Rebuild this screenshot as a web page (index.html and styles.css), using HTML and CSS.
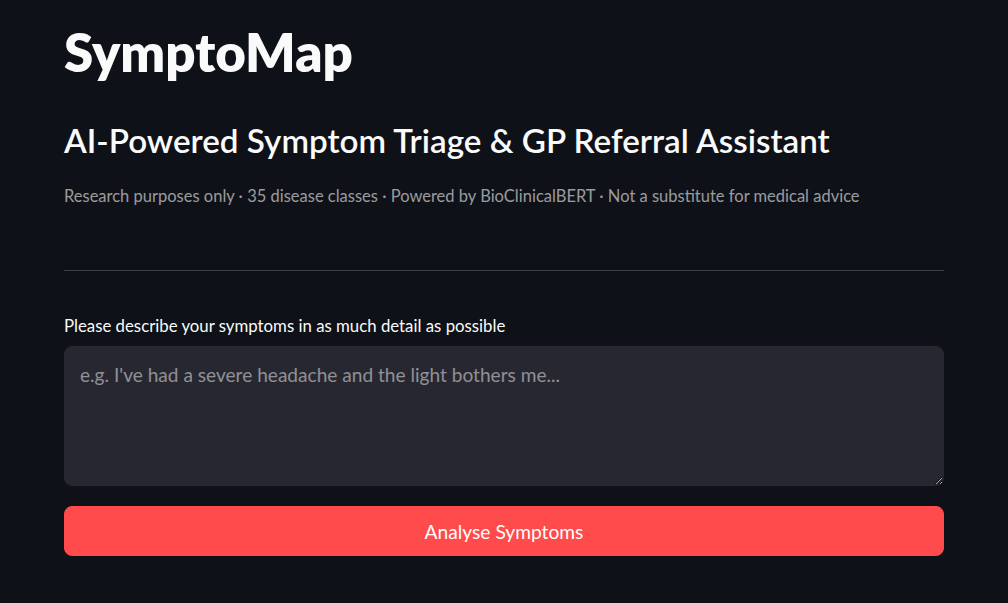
FILE: index.html
```html
<!DOCTYPE html>
<html>
<head>
<meta charset="utf-8">
<link rel="stylesheet" href="styles.css">
</head>
<body>
<main class="page">
  <h1 class="title">SymptoMap</h1>
  <h3 class="subtitle">AI-Powered Symptom Triage &amp; GP Referral Assistant</h3>
  <p class="caption">Research purposes only · 35 disease classes · Powered by BioClinicalBERT · Not a substitute for medical advice</p>
  <hr class="divider">
  <label class="label" for="symptoms">Please describe your symptoms in as much detail as possible</label>
  <textarea id="symptoms" class="input" placeholder="e.g. I've had a severe headache and the light bothers me..."></textarea>
  <button class="btn">Analyse Symptoms</button>
</main>
</body>
</html>
```
FILE: styles.css
```css
html, body {
  margin: 0;
  padding: 0;
  background: #0e1117;
  color: #fafafa;
  font-family: "Lato", "Noto Sans", sans-serif;
}
.page {
  width: 880px;
  margin: 0 auto;
  padding: 20px 0 0 0;
  display: flex;
  flex-direction: column;
}
.title {
  font-size: 52.8px;
  font-weight: 800;
  margin: 0;
  line-height: 64px;
}
.subtitle {
  font-size: 33.2px;
  font-weight: 600;
  margin: 36px 0 0 0;
  line-height: 40px;
}
.caption {
  font-size: 16.5px;
  color: rgba(250,250,250,0.6);
  margin: 24px 0 0 0;
  line-height: 24px;
}
.divider {
  border: none;
  border-top: 1px solid rgba(250,250,250,0.2);
  margin: 62px 0 0 0;
  height: 0;
}
.label {
  font-size: 16.8px;
  margin-top: 45px;
  line-height: 20px;
}
.input {
  margin-top: 10px;
  height: 140px;
  box-sizing: border-box;
  background: #262730;
  border: 1px solid #262730;
  border-radius: 8px;
  color: #fafafa;
  font-family: inherit;
  font-size: 19.1px;
  line-height: 26.7px;
  padding: 15px 15px;
  resize: vertical;
  outline: none;
}
.input::placeholder {
  color: rgba(250,250,250,0.5);
}
.btn {
  margin-top: 20px;
  height: 50px;
  background: #ff4b4b;
  border: 1px solid #ff4b4b;
  border-radius: 8px;
  color: #fff;
  font-family: inherit;
  font-size: 19.2px;
  padding: 0;
}
```
